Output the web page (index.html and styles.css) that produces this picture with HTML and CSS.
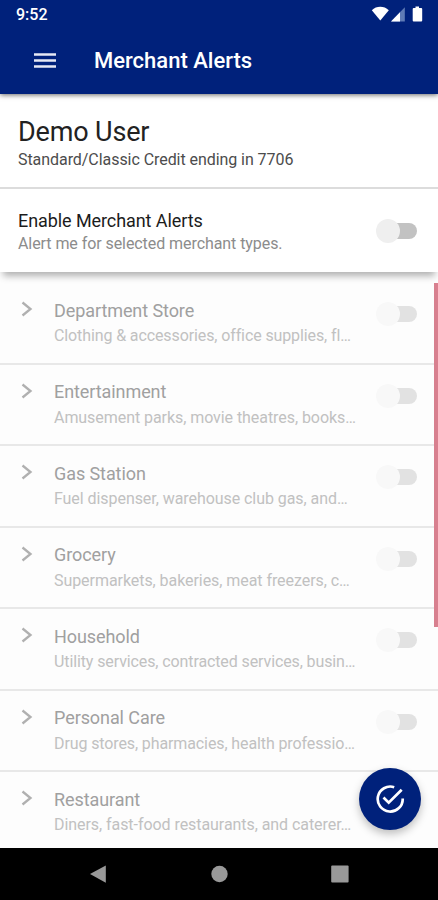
FILE: index.html
```html
<!DOCTYPE html>
<html lang="en">
<head>
<meta charset="utf-8">
<title>Merchant Alerts</title>
<link rel="stylesheet" href="styles.css">
</head>
<body>
<div class="screen">
  <header class="header">
    <div class="status">
      <span class="clock">9:52</span>
      <svg class="status-icons" width="52" height="18" viewBox="0 0 52 18">
        <path d="M0.8 5.2C5.5 0.6 13 0.6 17.8 5.2L9.3 15.6Z" fill="#fff"/>
        <path d="M33.8 2.2V16.5H20Z" fill="#5f7bb5"/>
        <path d="M29 7.2V16.5H20Z" fill="#fff"/>
        <path d="M44.5 1.500h3.500v1.500h2.200q1 0 1 1V15.500q0 1-1 1h-7.500q-1 0-1-1V4q0-1 1-1h1.800z" fill="#fff"/>
      </svg>
    </div>
    <div class="appbar">
      <svg class="menu" width="22" height="16" viewBox="0 0 22 16"><path d="M0 1.500H22M0 7.500H22M0 13.500H22" stroke="#e6e9f5" stroke-width="2.4"/></svg>
      <h1 class="title">Merchant Alerts</h1>
    </div>
  </header>
  <section class="account">
    <h2 class="name">Demo User</h2>
    <p class="card">Standard/Classic Credit ending in 7706</p>
  </section>
  <section class="enable">
    <div class="enable-text">
      <h3 class="enable-title">Enable Merchant Alerts</h3>
      <p class="enable-sub">Alert me for selected merchant types.</p>
    </div>
    <span class="switch"></span>
  </section>
  <main class="list">
    <div class="scrollbar"></div>
    <div class="row"><svg class="chevron" viewBox="0 0 12 16"><path d="M1.500 1.500L9.500 8L1.500 14.500"/></svg><div class="text"><h3 class="label">Department Store</h3><p class="sub tight">Clothing &amp; accessories, office supplies, fl…</p></div><span class="switch"></span></div>
    <div class="row"><svg class="chevron" viewBox="0 0 12 16"><path d="M1.500 1.500L9.500 8L1.500 14.500"/></svg><div class="text"><h3 class="label">Entertainment</h3><p class="sub">Amusement parks, movie theatres, books…</p></div><span class="switch"></span></div>
    <div class="row"><svg class="chevron" viewBox="0 0 12 16"><path d="M1.500 1.500L9.500 8L1.500 14.500"/></svg><div class="text"><h3 class="label">Gas Station</h3><p class="sub">Fuel dispenser, warehouse club gas, and…</p></div><span class="switch"></span></div>
    <div class="row"><svg class="chevron" viewBox="0 0 12 16"><path d="M1.500 1.500L9.500 8L1.500 14.500"/></svg><div class="text"><h3 class="label">Grocery</h3><p class="sub">Supermarkets, bakeries, meat freezers, c…</p></div><span class="switch"></span></div>
    <div class="row"><svg class="chevron" viewBox="0 0 12 16"><path d="M1.500 1.500L9.500 8L1.500 14.500"/></svg><div class="text"><h3 class="label">Household</h3><p class="sub tight">Utility services, contracted services, busin…</p></div><span class="switch"></span></div>
    <div class="row"><svg class="chevron" viewBox="0 0 12 16"><path d="M1.500 1.500L9.500 8L1.500 14.500"/></svg><div class="text"><h3 class="label">Personal Care</h3><p class="sub tight">Drug stores, pharmacies, health professio…</p></div><span class="switch"></span></div>
    <div class="row"><svg class="chevron" viewBox="0 0 12 16"><path d="M1.500 1.500L9.500 8L1.500 14.500"/></svg><div class="text"><h3 class="label">Restaurant</h3><p class="sub">Diners, fast-food restaurants, and caterer…</p></div></div>
    <button class="fab" aria-label="Save">
      <svg width="30" height="30" viewBox="0 0 30 30" fill="none" stroke="#fff" stroke-width="2.700">
        <path d="M19.200 3.200A12.500 12.500 0 1 0 27.700 14.500"/>
        <path d="M8.500 13.500L13.700 18.700L26.700 5.700"/>
      </svg>
    </button>
  </main>
  <nav class="navbar">
    <svg width="438" height="52" viewBox="0 0 438 52" fill="#999">
      <path d="M90 26L105.800 17.400V34.800Z"/>
      <circle cx="219.500" cy="26" r="8.200"/>
      <rect x="331.200" y="17.400" width="17.400" height="17.200" rx="1"/>
    </svg>
  </nav>
</div>
</body>
</html>
```
FILE: styles.css
```css
* { box-sizing: border-box; }
body { margin: 0; font-family: Roboto, sans-serif; background: #fdfdfd; }
h1, h2, h3, p { margin: 0; font-weight: 400; white-space: nowrap; }
.screen { width: 438px; height: 900px; display: flex; flex-direction: column; overflow: hidden; }
.header { height: 94px; flex: none; background: #00217b; color: #fff; box-shadow: 0 1px 5px rgba(0,0,0,.6); position: relative; z-index: 3; }
.status { height: 28px; display: flex; justify-content: space-between; padding: 5px 15px 0 16px; }
.clock { font-size: 16px; line-height: 19px; font-weight: 500; }
.appbar { height: 66px; display: flex; align-items: center; padding: 0 0 1px 34px; }
.title { margin-left: 38px; font-size: 22px; line-height: 28px; font-weight: 500; }
.account { height: 95px; flex: none; background: #fff; border-bottom: 2px solid #dcdcdc; padding: 22px 18px 0; }
.name { font-size: 27px; line-height: 32px; letter-spacing: -.15px; color: #222; }
.card { font-size: 16px; line-height: 20px; letter-spacing: -.06px; margin-top: 2px; color: #4c4c4c; }
.enable { height: 83px; flex: none; background: #fff; display: flex; justify-content: space-between; padding: 19px 20px 0 18px; box-shadow: 0 7px 7px -3px rgba(0,0,0,.3); position: relative; z-index: 2; }
.enable-title { font-size: 18px; line-height: 25px; letter-spacing: -.08px; color: #1c1c1c; }
.enable-sub { font-size: 16px; line-height: 20px; letter-spacing: -.07px; margin-top: 1px; color: #8c8c8c; }
.switch { flex: none; width: 42px; height: 24px; display: flex; align-items: center; margin-top: 11px; position: relative; }
.switch::before { content: ""; width: 24px; height: 24px; border-radius: 50%; background: #efefef; position: relative; z-index: 1; }
.switch::after { content: ""; width: 32px; height: 16px; margin-left: -15px; border-radius: 8px; background: #c2c2c2; }
.list { flex: 1; min-height: 0; background: #fdfdfd; padding-top: 11.400px; position: relative; overflow: hidden; }
.row { height: 81.500px; display: flex; border-bottom: 2px solid #e8e8e8; padding: 0 20px 0 21px; }
.chevron { width: 12px; height: 16px; flex: none; margin-top: 17.900px; fill: none; stroke: #b0b0b0; stroke-width: 2.300; }
.text { margin-left: 21px; padding-top: 14.600px; flex: 1; min-width: 0; }
.label { font-size: 18px; line-height: 25px; letter-spacing: -.08px; color: #a0a0a0; }
.sub { font-size: 16px; line-height: 22px; letter-spacing: -.06px; margin-top: 2.500px; color: #c1c1c1; }
.tight { letter-spacing: -.11px; }
.row .switch { margin-top: 18.900px; }
.row .switch::before { background: #f8f8f8; }
.row .switch::after { background: #e2e2e2; }
.scrollbar { position: absolute; right: 0; top: 11px; width: 4px; height: 344px; background: #d8808f; }
.fab { position: absolute; left: 359px; top: 496px; width: 62px; height: 62px; border: 0; padding: 0; border-radius: 50%; background: #00217b; display: flex; align-items: center; justify-content: center; box-shadow: 0 4px 8px rgba(0,0,0,.25); z-index: 2; }
.navbar { height: 52px; flex: none; background: #000; }
```
